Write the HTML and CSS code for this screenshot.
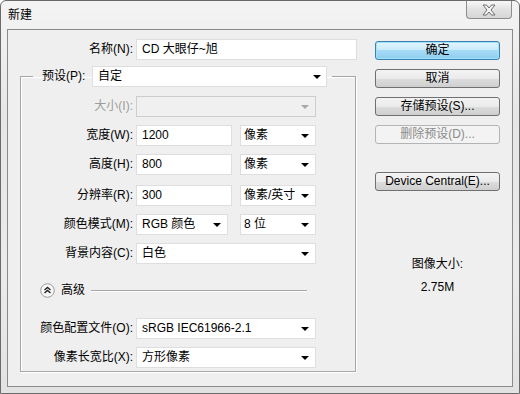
FILE: index.html
```html
<!DOCTYPE html>
<html lang="zh-CN">
<head>
    <meta charset="UTF-8">
    <title>新建</title>
    <link rel="stylesheet" href="styles.css">
</head>
<body>

    <div class="window">
        <!-- title bar -->
        <div class="titlebar">
            <span class="title">新建</span>
            <div class="close">
                <svg width="16" height="12" viewBox="0 0 16 12">
                    <path d="M2 1 H5.5 L8 4 L10.5 1 H14 L10 6 L14 11 H10.5 L8 8 L5.5 11 H2 L6 6 Z" fill="#f4f4f4" stroke="#6f6f6f" stroke-width="1"/>
                </svg>
            </div>
        </div>

        <div class="client">
            <div class="main">
                <div class="row">
                    <span class="lbl lbl-name">名称(N):</span>
                    <div class="field name">CD 大眼仔~旭</div>
                </div>

                <fieldset class="preset">
                    <legend class="preset-head">
                        <span class="lbl-preset">预设(P):</span>
                        <div class="field select preset-sel">自定</div>
                    </legend>

                    <div class="row">
                        <span class="lbl off">大小(I):</span>
                        <div class="field select full disabled"></div>
                    </div>
                    <div class="row">
                        <span class="lbl">宽度(W):</span>
                        <div class="field num">1200</div>
                        <div class="field select unit">像素</div>
                    </div>
                    <div class="row">
                        <span class="lbl">高度(H):</span>
                        <div class="field num">800</div>
                        <div class="field select unit">像素</div>
                    </div>
                    <div class="row sp">
                        <span class="lbl">分辨率(R):</span>
                        <div class="field num">300</div>
                        <div class="field select unit">像素/英寸</div>
                    </div>
                    <div class="row">
                        <span class="lbl">颜色模式(M):</span>
                        <div class="field select mode">RGB 颜色</div>
                        <div class="field select unit">8 位</div>
                    </div>
                    <div class="row">
                        <span class="lbl">背景内容(C):</span>
                        <div class="field select full">白色</div>
                    </div>

                    <div class="advanced">
                        <svg class="adv-icon" width="15" height="15" viewBox="0 0 15 15">
                            <circle cx="7.5" cy="7.5" r="6.8" fill="#f7f7f7" stroke="#9a9a9a"/>
                            <path d="M4.5 7 L7.5 4.5 L10.5 7 M4.5 10 L7.5 7.5 L10.5 10" fill="none" stroke="#222" stroke-width="1.4"/>
                        </svg>
                        <span class="adv-text">高级</span>
                        <div class="adv-line"></div>
                    </div>

                    <div class="row profile">
                        <span class="lbl">颜色配置文件(O):</span>
                        <div class="field select full">sRGB IEC61966-2.1</div>
                    </div>
                    <div class="row">
                        <span class="lbl">像素长宽比(X):</span>
                        <div class="field select full">方形像素</div>
                    </div>
                </fieldset>
            </div>

            <div class="side">
                <div class="btn default">确定</div>
                <div class="btn">取消</div>
                <div class="btn">存储预设(S)...</div>
                <div class="btn disabled">删除预设(D)...</div>
                <div class="btn device">Device Central(E)...</div>

                <div class="info">
                    <div>图像大小:</div>
                    <div>2.75M</div>
                </div>
            </div>
        </div>
    </div>

</body>
</html>
```

FILE: styles.css
```css
* {
    box-sizing: border-box;
}

body {
    margin: 0;
    font: 12px/19px "Liberation Sans", "Noto Sans CJK SC", sans-serif;
    color: #000;
}

.window {
    width: 520px;
    height: 394px;
    border: 1px solid #6b6b6b;
    border-radius: 6px 6px 0 0;
    background: linear-gradient(#f4f4f4, #e6e6e6 30%, #ebebeb 70%, #e2e2e2);
    padding: 0 6px 6px;
    display: flex;
    flex-direction: column;
}

/* title bar */
.titlebar {
    height: 28px;
    display: flex;
    justify-content: space-between;
    align-items: flex-start;
}

    .titlebar .title {
        margin: 5px 0 0 1px;
    }

.close {
    width: 46px;
    height: 18px;
    margin-right: 1px;
    border: 1px solid #8d8d8d;
    border-top: none;
    border-radius: 0 0 4px 4px;
    background: linear-gradient(#f8f8f8, #e2e2e2 50%, #d6d6d6);
    display: flex;
    align-items: center;
    justify-content: center;
}

/* client area */
.client {
    flex: 1;
    border: 1px solid #8a8a8a;
    background: #efefef;
    display: flex;
}

.main {
    width: 349px;
    padding: 9px 0 0 12px;
}

.row {
    display: flex;
    align-items: center;
    gap: 3px;
    height: 21px;
}

    .row + .row {
        margin-top: 8px;
    }

    .row.sp {
        margin-top: 10px;
    }

.lbl {
    width: 112px;
    text-align: right;
    white-space: nowrap;
}

.lbl-name {
    width: 113px;
}

.off {
    color: #9c9c9c;
}

/* fields */
.field {
    position: relative;
    height: 21px;
    background: #fff;
    border: 1px solid #dedede;
    padding-left: 5px;
    line-height: 19px;
    white-space: nowrap;
}

.select::after {
    content: "";
    position: absolute;
    right: 6px;
    top: 8px;
    border-left: 4px solid transparent;
    border-right: 4px solid transparent;
    border-top: 4px solid #000;
}

.field.disabled {
    background: #f0f0f0;
    border-color: #cdcdcd;
}

    .field.disabled::after {
        border-top-color: #a8a8a8;
    }

.name {
    width: 221px;
}

.full {
    width: 180px;
}

.num {
    width: 96px;
}

.unit {
    width: 76px;
    margin-left: 5px;
    padding-left: 3px;
}

.mode {
    width: 92px;
}

    .mode + .unit {
        margin-left: 9px;
    }

/* preset group */
.preset {
    width: 336px;
    margin: 6px 0 0;
    padding: 9px 0 3px;
    border: 1px solid #a6a6a6;
    box-shadow: inset 1px 1px 0 #fff, 1px 1px 0 #fff;
    min-width: 0;
}

.preset-head {
    display: flex;
    align-items: center;
    gap: 3px;
    margin-left: 12px;
    padding: 0 5px 0 9px;
}

.lbl-preset {
    width: 47px;
    white-space: nowrap;
}

.preset-sel {
    width: 235px;
}

    .preset-sel::after {
        right: 5px;
    }

.advanced {
    display: flex;
    align-items: center;
    height: 15px;
    margin-top: 19px;
    padding-left: 19px;
}

.adv-text {
    margin-left: 6px;
}

.adv-line {
    flex: 1;
    margin: 1px 48px 0 6px;
    border-top: 1px solid #a6a6a6;
    border-bottom: 1px solid #fff;
}

.row.profile {
    margin-top: 20px;
}

/* right column */
.side {
    width: 143px;
    padding: 11px 0 0 18px;
}

.btn {
    width: 125px;
    height: 19px;
    border: 1px solid #707070;
    border-radius: 3px;
    background: linear-gradient(#f3f3f3, #ebebeb 50%, #dddddd 50%, #cfcfcf);
    text-align: center;
    line-height: 17px;
    white-space: nowrap;
}

    .btn + .btn {
        margin-top: 9px;
    }

    .btn.default {
        border-color: #3c7fb1;
        background: linear-gradient(#e5f5fd, #c6eafb 50%, #a6dbf6 50%, #8fcdf0);
        box-shadow: inset 0 0 0 1px #9ee3fa;
    }

    .btn.disabled {
        border-color: #b2b5b7;
        background: #f3f3f3;
        color: #8a8a8a;
    }

    .btn.device {
        margin-top: 28px;
    }

.info {
    margin-top: 62px;
    width: 125px;
    text-align: center;
    line-height: 23px;
}
```
